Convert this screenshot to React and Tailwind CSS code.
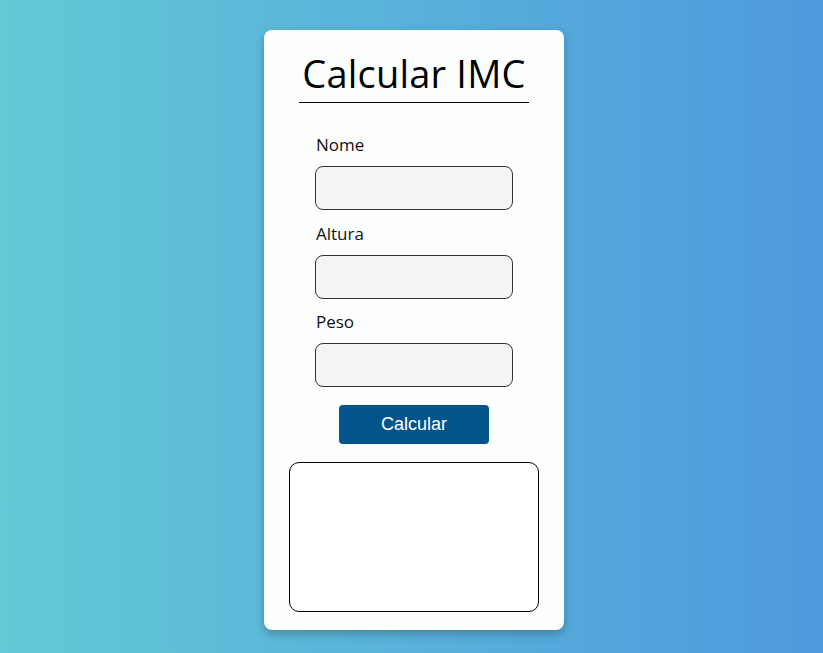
export default function App() {
  const font = { fontFamily: '"Open Sans", "Noto Sans", sans-serif' };
  return (
    <div className="w-full h-[653px] flex justify-center pl-[5px] bg-gradient-to-r from-[#63c9d5] to-[#4f99de] overflow-hidden">
      <div className="mt-[30px] w-[300px] h-[600px] bg-[#fdfffe] rounded-lg shadow-[0_4px_10px_rgba(0,0,0,0.25)] flex flex-col items-center" style={font}>
        <h1 className="mt-[16px] w-[230px] text-center text-[38px] leading-[54px] font-normal text-black border-b border-black pb-[2px] tracking-[0.2px]">Calcular IMC</h1>
        <div className="w-[198px] flex flex-col mt-[28px]">
          <label className="text-[17px] leading-[27px] text-[#111] pl-[1px]">Nome</label>
          <input className="mt-[8px] h-[44px] w-[198px] rounded-lg border border-[#333] bg-[#f4f4f4] outline-none" />
          <label className="mt-[10px] text-[17px] leading-[27px] text-[#111] pl-[1px]">Altura</label>
          <input className="mt-[8px] h-[44px] w-[198px] rounded-lg border border-[#333] bg-[#f4f4f4] outline-none" />
          <label className="mt-[9px] text-[17px] leading-[27px] text-[#111] pl-[1px]">Peso</label>
          <input className="mt-[8px] h-[44px] w-[198px] rounded-lg border border-[#333] bg-[#f4f4f4] outline-none" />
        </div>
        <button className="mt-[18px] w-[150px] h-[39px] rounded bg-[#02558a] text-white text-[18px]" style={{ fontFamily: '"Liberation Sans", Arial, sans-serif' }}>Calcular</button>
        <div className="mt-[18px] w-[250px] h-[150px] rounded-[10px] border border-black bg-white"></div>
      </div>
    </div>
  );
}
